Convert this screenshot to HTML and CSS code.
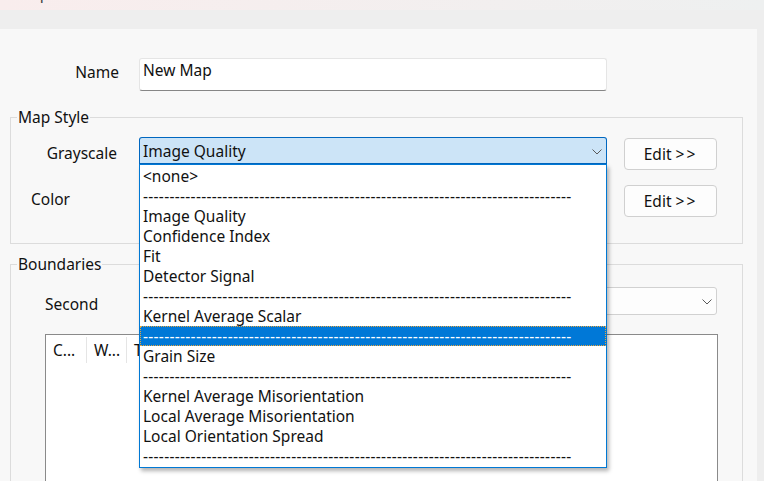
FILE: index.html
```html
<!DOCTYPE html>
<html lang="en">
<head>
    <meta charset="UTF-8">
    <title>Map</title>
    <link rel="stylesheet" href="styles.css">
</head>
<body>
    <div class="titleBar"><span class="titleText">Map</span></div>
    <div class="band"></div>
    <div class="window">
        <div class="panel">
            <div class="row nameRow">
                <label class="lbl lblName">Name</label>
                <div class="textBox">New Map</div>
            </div>

            <fieldset class="group styleGroup">
                <legend>Map Style</legend>
                <div class="row grayRow">
                    <label class="lbl lblGray">Grayscale</label>
                    <div class="combo comboActive">
                        <span class="comboText">Image Quality</span>
                        <svg class="chevron" width="10" height="6" viewBox="0 0 10 6"><path d="M0.5 0.5 L5 5 L9.5 0.5" fill="none" stroke="#5a5a5a" stroke-width="1"/></svg>
                    </div>
                    <button class="editBtn">Edit <span class="arrows">&gt;&gt;</span></button>
                </div>
                <div class="row colorRow">
                    <label class="lbl lblColor">Color</label>
                    <div class="combo comboLow"></div>
                    <button class="editBtn editLow">Edit <span class="arrows">&gt;&gt;</span></button>
                </div>
            </fieldset>

            <fieldset class="group boundGroup">
                <legend>Boundaries</legend>
                <div class="row secondRow">
                    <label class="lbl lblSecond">Second</label>
                    <div class="combo comboWide">
                        <svg class="chevron" width="10" height="6" viewBox="0 0 10 6"><path d="M0.5 0.5 L5 5 L9.5 0.5" fill="none" stroke="#5a5a5a" stroke-width="1"/></svg>
                    </div>
                </div>
                <div class="listView">
                    <div class="lvHead">
                        <div class="lvCol">C...</div>
                        <div class="lvCol">W...</div>
                        <div class="lvCol">T</div>
                    </div>
                </div>
            </fieldset>

            <!-- open drop-down of the Grayscale combo -->
            <div class="dropList">
                <div class="item">&lt;none&gt;</div>
                <div class="item sep">---------------------------------------------------------------------------------</div>
                <div class="item">Image Quality</div>
                <div class="item">Confidence Index</div>
                <div class="item">Fit</div>
                <div class="item">Detector Signal</div>
                <div class="item sep">---------------------------------------------------------------------------------</div>
                <div class="item">Kernel Average Scalar</div>
                <div class="item sep selected">---------------------------------------------------------------------------------</div>
                <div class="item">Grain Size</div>
                <div class="item sep">---------------------------------------------------------------------------------</div>
                <div class="item">Kernel Average Misorientation</div>
                <div class="item">Local Average Misorientation</div>
                <div class="item">Local Orientation Spread</div>
                <div class="item sep">---------------------------------------------------------------------------------</div>
            </div>
        </div>
        <div class="sideStrip"></div>
    </div>
</body>
</html>
```

FILE: styles.css
```css
body{
    margin: 0;
    width: 764px;
    height: 481px;
    overflow: hidden;
    font-family: "Noto Sans", "Open Sans", sans-serif;
    font-size: 15.5px;
    color: #111;
    background-color: #efefef;
}
.titleBar{
    height: 10px;
    overflow: hidden;
    padding-left: 17px;
    background: linear-gradient(to right, #f9eded, #eef0f0);
}
.titleText{
    display: block;
    line-height: 20px;
    margin-top: -17px;
    color: #444;
}
.band{
    height: 19px;
    background-color: #eeeeee;
}
.window{
    display: flex;
    height: 452px;
}
.panel{
    position: relative;
    width: 757px;
    background-color: #f8f8f8;
    overflow: hidden;
}
.sideStrip{
    flex: 1;
    background-color: #eeeeee;
}
.row{
    display: flex;
    align-items: flex-start;
}
.lbl{
    flex-shrink: 0;
    line-height: 20px;
    box-sizing: border-box;
}

/* name */
.nameRow{
    margin-top: 29px;
}
.lblName{
    width: 139px;
    text-align: right;
    padding-right: 20px;
    margin-top: 4px;
}
.textBox{
    width: 468px;
    height: 33px;
    box-sizing: border-box;
    background-color: #fff;
    border: 1px solid #e5e5e5;
    border-bottom-color: #868686;
    border-radius: 3px;
    padding: 1px 3px;
    line-height: 20px;
}

/* group boxes */
.group{
    margin: 0 0 0 10px;
    width: 733px;
    box-sizing: border-box;
    border: 1px solid #dcdcdc;
    padding: 0;
    min-inline-size: auto;
}
.group legend{
    margin-left: 6px;
    padding: 0 1px;
    line-height: 20px;
}
.styleGroup{
    margin-top: 16px;
    padding-bottom: 26px;
}
.boundGroup{
    margin-top: 10px;
    height: 240px;
}
.grayRow{
    margin-top: 10px;
}
.lblGray{
    width: 128px;
    text-align: right;
    padding-right: 22px;
    margin-top: 6px;
}
.colorRow{
    margin-top: 15px;
}
.lblColor{
    width: 128px;
    padding-left: 20px;
    margin-top: 4px;
}
.secondRow{
    margin-top: 13px;
}
.lblSecond{
    width: 128px;
    padding-left: 34px;
    margin-top: 7px;
}

/* combos */
.combo{
    display: flex;
    align-items: flex-start;
    width: 468px;
    height: 28px;
    box-sizing: border-box;
    border: 1px solid #d1d1d1;
    border-radius: 3px;
    background-color: #fdfdfd;
    padding: 3px 3px 0 3px;
    line-height: 20px;
}
.comboActive{
    background-color: #cce4f7;
    border-color: #0067c0;
    border-bottom-width: 2px;
    border-radius: 3px 3px 0 0;
}
.comboLow{
    margin-top: 2px;
}
.comboWide{
    width: 578px;
}
.chevron{
    margin-left: auto;
    margin-top: 8px;
    margin-right: 1px;
}

.editBtn{
    margin-left: 17px;
    margin-top: 1px;
    width: 93px;
    height: 32px;
    padding: 0;
    border: 1px solid #d0d0d0;
    border-radius: 4px;
    background-color: #fdfdfd;
    font-family: inherit;
    font-size: 15.5px;
    color: #111;
}
.editLow{
    margin-top: 0;
}
.arrows{
    letter-spacing: 2px;
}

/* list view */
.listView{
    margin: 19px 0 0 34px;
    width: 673px;
    height: 200px;
    box-sizing: border-box;
    border: 1px solid #8a8a8a;
    background-color: #fff;
}
.lvHead{
    display: flex;
    margin-top: 2px;
    height: 26px;
}
.lvCol{
    width: 40px;
    box-sizing: border-box;
    padding: 3px 0 0 7px;
    line-height: 20px;
    border-right: 1px solid #e5e5e5;
}
.lvCol:first-child{
    width: 41px;
}

/* drop-down list */
.dropList{
    position: absolute;
    top: 135px;
    left: 139px;
    width: 468px;
    height: 304px;
    box-sizing: border-box;
    border: 1px solid #0078d4;
    background-color: #fff;
    padding-top: 1px;
    box-shadow: 2px 3px 4px rgba(0, 0, 0, 0.3);
}
.item{
    height: 20px;
    line-height: 20px;
    padding-left: 3px;
    white-space: nowrap;
}
.sep{
    letter-spacing: 0.3px;
}
.selected{
    background-color: #0078d7;
    color: #fff;
    outline: 1px dotted #e9a53c;
    outline-offset: -1px;
}
```
